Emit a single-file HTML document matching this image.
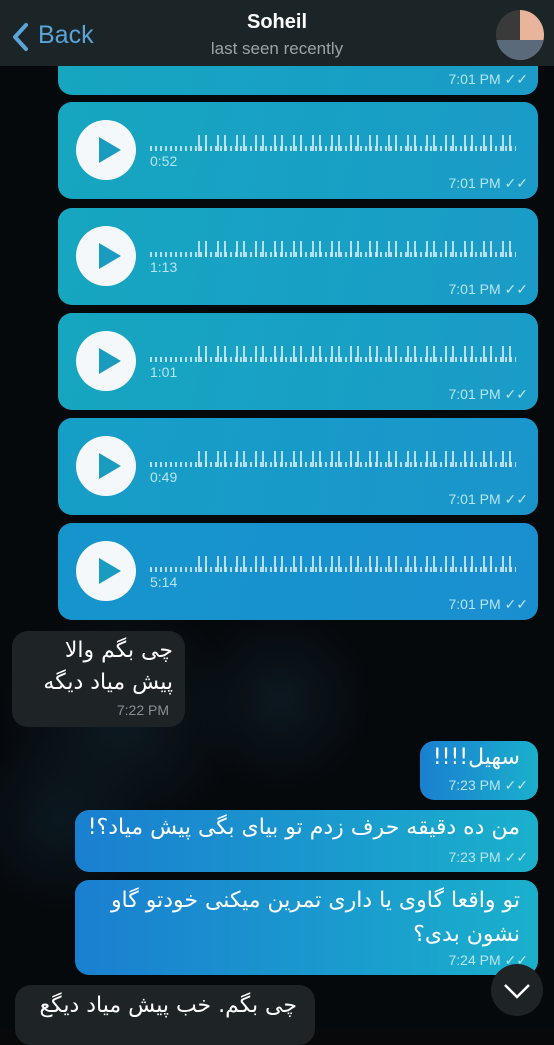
<!DOCTYPE html>
<html><head><meta charset="utf-8"><style>
*{margin:0;padding:0;box-sizing:border-box}
body{width:554px;height:1029px;overflow:hidden;background:#07090b;position:relative;font-family:"Liberation Sans",sans-serif}
.bg{position:absolute;inset:0;background:radial-gradient(circle at 120px 720px,#0d1a22 0,transparent 120px),radial-gradient(circle at 280px 700px,#0c1820 0,transparent 90px),radial-gradient(circle at 60px 820px,#0b1820 0,transparent 90px),#06090c}
.hdr{position:absolute;left:0;top:0;width:554px;height:66px;background:#1b2527}
.back{position:absolute;left:38px;top:21px;color:#5aa4d8;font-size:25px}
.chev{position:absolute;left:10px;top:22px}
.name{position:absolute;left:0;width:554px;text-align:center;top:11px;color:#fff;font-weight:bold;font-size:20px}
.seen{position:absolute;left:0;width:554px;text-align:center;top:39px;color:#9aa4a6;font-size:17px}
.av{position:absolute;left:496px;top:10px;width:48px;height:50px;border-radius:50%;background:linear-gradient(90deg,#3a3a3a 0 50%,#e8b49c 50%);overflow:hidden}
.av:after{content:"";position:absolute;left:0;top:30px;width:48px;height:20px;background:#5a6a7a}
.vb{position:absolute;left:58px;width:480px;height:97px;border-radius:14px;background:linear-gradient(100deg,#16a6c0,#1a9bc8)}
.play{position:absolute;left:18px;top:18px;width:60px;height:60px;border-radius:50%;background:#f4f8fa}
.play:after{content:"";position:absolute;left:23px;top:17px;border-left:22px solid #1a9cc0;border-top:13px solid transparent;border-bottom:13px solid transparent}
.wave2{position:absolute;left:92px;top:44px;width:366px;height:5px;background:repeating-linear-gradient(90deg,rgba(220,240,250,.8) 0 2px,transparent 2px 5px)}
.wave3{position:absolute;left:140px;top:33px;width:320px;height:16px;background:repeating-linear-gradient(90deg,rgba(220,240,250,.8) 0 2px,transparent 2px 7px,rgba(220,240,250,.8) 7px 9px,transparent 9px 19px)}
.dur{position:absolute;left:92px;top:51px;color:#b5e6f2;font-size:14px}
.tm{position:absolute;right:10px;bottom:7px;color:#b5e6f2;font-size:14px}
.ar{font-family:"DejaVu Sans",sans-serif;direction:rtl}
.lb{position:absolute;background:#1e2326;border-radius:16px;color:#fff}
.rb{position:absolute;left:75px;width:463px;border-radius:14px;background:linear-gradient(90deg,#1a7fd0,#1ab0cc);color:#fff}
.btn{position:absolute;left:491px;top:964px;width:52px;height:52px;border-radius:50%;background:#1e2326}
</style></head><body>
<div class="bg"></div>
<div class="vb" style="top:-2px"><div class="play" style="top:-40px"></div><div class="tm">7:01 PM ✓✓</div></div>
<div class="vb" style="top:102px"><div class="play"></div><div class="wave3"></div><div class="wave2"></div><div class="dur">0:52</div><div class="tm">7:01 PM ✓✓</div></div>
<div class="vb" style="top:208px"><div class="play"></div><div class="wave3"></div><div class="wave2"></div><div class="dur">1:13</div><div class="tm">7:01 PM ✓✓</div></div>
<div class="vb" style="top:313px"><div class="play"></div><div class="wave3"></div><div class="wave2"></div><div class="dur">1:01</div><div class="tm">7:01 PM ✓✓</div></div>
<div class="vb" style="top:418px;background:linear-gradient(100deg,#169fc6,#1a95cc)"><div class="play"></div><div class="wave3"></div><div class="wave2"></div><div class="dur">0:49</div><div class="tm">7:01 PM ✓✓</div></div>
<div class="vb" style="top:523px;background:linear-gradient(100deg,#1695cc,#1a8fd0)"><div class="play"></div><div class="wave3"></div><div class="wave2"></div><div class="dur">5:14</div><div class="tm">7:01 PM ✓✓</div></div>

<div class="lb" style="left:12px;top:631px;width:173px;height:96px"><div class="ar" style="position:absolute;right:12px;top:4px;font-size:22px;line-height:32px;text-align:right;white-space:nowrap">چی بگم والا<br>پیش میاد دیگه</div><div style="position:absolute;right:16px;bottom:9px;color:#8a9094;font-size:14px">7:22 PM</div></div>

<div class="rb" style="left:420px;width:118px;top:741px;height:59px"><div class="ar" style="position:absolute;right:18px;top:4px;font-size:22px;white-space:nowrap">سهیل!!!!</div><div style="position:absolute;right:10px;bottom:6px;color:#b5e6f2;font-size:14px">7:23 PM ✓✓</div></div>
<div class="rb" style="top:810px;height:62px"><div class="ar" style="position:absolute;right:18px;top:5px;font-size:22px;white-space:nowrap">من ده دقیقه حرف زدم تو بیای بگی پیش میاد؟!</div><div style="position:absolute;right:10px;bottom:6px;color:#b5e6f2;font-size:14px">7:23 PM ✓✓</div></div>
<div class="rb" style="top:880px;height:95px"><div class="ar" style="position:absolute;right:18px;top:4px;font-size:22px;line-height:34px;text-align:right;white-space:nowrap">تو واقعا گاوی یا داری تمرین میکنی خودتو گاو<br>نشون بدی؟</div><div style="position:absolute;right:10px;bottom:6px;color:#b5e6f2;font-size:14px">7:24 PM ✓✓</div></div>
<div class="lb" style="left:15px;top:985px;width:300px;height:60px"><div class="ar" style="position:absolute;right:18px;top:8px;font-size:22px;white-space:nowrap">چی بگم. خب پیش میاد دیگع</div></div>
<div class="btn"><svg width="52" height="52"><path d="M14 21 L26 33 L38 21" stroke="#fff" stroke-width="2.5" fill="none"/></svg></div>

<div class="hdr"></div>
<svg class="chev" width="22" height="30"><path d="M16 3 L5 15 L16 27" stroke="#5aa4d8" stroke-width="4" fill="none" stroke-linecap="round" stroke-linejoin="round"/></svg>
<div class="back">Back</div>
<div class="name">Soheil</div>
<div class="seen">last seen recently</div>
<div class="av"></div>
</body></html>
